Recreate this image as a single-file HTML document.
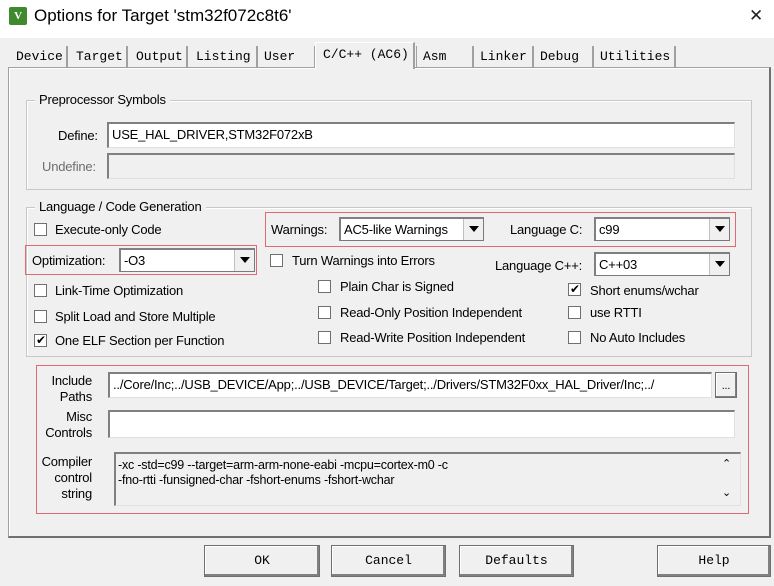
<!DOCTYPE html><html><head><style>
*{margin:0;padding:0;box-sizing:border-box}
body{width:774px;height:586px;background:#f0f0f0;position:relative;overflow:hidden;font:13px "Liberation Sans",sans-serif;color:#000;letter-spacing:-0.2px}
.a{position:absolute;white-space:nowrap}
.tab{position:absolute;top:46px;height:22px;font:13px "Liberation Mono",monospace;letter-spacing:0;padding:3px 0 0 6px;border-right:2px solid #a0a0a0}
.grp{position:absolute;border:1px solid #c8c8c8;box-shadow:inset 1px 1px 0 #fff}
.lg{position:absolute;background:#f0f0f0;padding:0 4px;top:-9px;left:8px}
.inp{position:absolute;background:#fff;border-top:2px solid #808080;border-left:2px solid #808080;border-right:1px solid #e0e0e0;border-bottom:1px solid #e0e0e0;padding:3px 3px 1px}
.dis{background:#f0f0f0}
.cb{position:absolute;width:13px;height:13px;border:1px solid #707070;background:#fff}
.cmb{position:absolute;background:#fff;border:1px solid #7a7a7a;border-top:2px solid #808080;border-left:2px solid #808080;padding:3px 3px 0}
.arr{position:absolute;right:0;top:0;bottom:0;width:20px;background:#f0f0f0;border-left:1px solid #c0c0c0}
.arr:after{content:"";position:absolute;left:5px;top:7px;border:5px solid transparent;border-top:6px solid #000}
.red{position:absolute;border:1.5px solid #e06a72}
.btn{position:absolute;top:545px;height:32px;border:1px solid #707070;box-shadow:inset -2px -2px 0 #808080,inset 1px 1px 0 #fff;font:13px "Liberation Mono",monospace;text-align:center;line-height:30px;letter-spacing:0;background:#f0f0f0}
</style></head><body>
<div class="a" style="left:0;top:0;width:774px;height:38px;background:#fff"></div>
<div class="a" style="left:9px;top:7px;width:18px;height:18px;background:#3f8a2e;border-radius:2px;color:#fff;font:bold 11px 'Liberation Serif',serif;text-align:center;line-height:18px">V</div>
<div class="a" style="left:34px;top:6px;font-size:17px;letter-spacing:0">Options for Target 'stm32f072c8t6'</div>
<div class="a" style="left:749px;top:6px;font-size:17px;font-weight:normal;color:#222">✕</div>

<div class="a" style="left:8px;top:67px;width:763px;height:471px;border:1px solid #a0a0a0;border-right:2px solid #707070;border-bottom:2px solid #707070;box-shadow:inset 1px 1px 0 #fff"></div>
<div class="tab" style="left:10px;width:58px">Device</div>
<div class="tab" style="left:70px;width:58px">Target</div>
<div class="tab" style="left:130px;width:58px">Output</div>
<div class="tab" style="left:190px;width:68px">Listing</div>
<div class="tab" style="left:258px;width:58px">User</div>
<div class="a" style="left:315px;top:42px;width:100px;height:27px;background:#f0f0f0;border:1px solid #fff;border-bottom:none;border-right:2px solid #a0a0a0;font:13px 'Liberation Mono',monospace;letter-spacing:0;padding:4px 0 0 7px">C/C++ (AC6)</div>
<div class="tab" style="left:416px;width:58px;border-left:1px solid #a0a0a0">Asm</div>
<div class="tab" style="left:474px;width:60px">Linker</div>
<div class="tab" style="left:534px;width:60px">Debug</div>
<div class="tab" style="left:594px;width:82px">Utilities</div>

<div class="grp" style="left:26px;top:100px;width:726px;height:90px"><div class="lg">Preprocessor Symbols</div></div>
<div class="a" style="left:58px;top:128px">Define:</div>
<div class="inp" style="left:107px;top:122px;width:628px;height:26px">USE_HAL_DRIVER,STM32F072xB</div>
<div class="a" style="left:42px;top:159px;color:#6d6d6d">Undefine:</div>
<div class="inp dis" style="left:107px;top:153px;width:628px;height:26px"></div>

<div class="grp" style="left:26px;top:207px;width:726px;height:150px"><div class="lg">Language / Code Generation</div></div>
<div class="cb" style="left:34px;top:223px"></div><div class="a" style="left:55px;top:222px">Execute-only Code</div>
<div class="red" style="left:265px;top:212px;width:471px;height:35px"></div>
<div class="a" style="left:271px;top:222px">Warnings:</div>
<div class="cmb" style="left:339px;top:217px;width:145px;height:24px">AC5-like Warnings<div class="arr"></div></div>
<div class="a" style="left:510px;top:222px">Language C:</div>
<div class="cmb" style="left:594px;top:217px;width:136px;height:24px">c99<div class="arr"></div></div>
<div class="red" style="left:25px;top:245px;width:232px;height:30px"></div>
<div class="a" style="left:32px;top:253px">Optimization:</div>
<div class="cmb" style="left:119px;top:248px;width:136px;height:24px">-O3<div class="arr"></div></div>
<div class="cb" style="left:270px;top:254px"></div><div class="a" style="left:292px;top:253px">Turn Warnings into Errors</div>
<div class="a" style="left:495px;top:258px">Language C++:</div>
<div class="cmb" style="left:594px;top:252px;width:136px;height:24px">C++03<div class="arr"></div></div>
<div class="cb" style="left:34px;top:284px"></div><div class="a" style="left:55px;top:283px">Link-Time Optimization</div>
<div class="cb" style="left:318px;top:280px"></div><div class="a" style="left:340px;top:279px">Plain Char is Signed</div>
<div class="cb" style="left:568px;top:283px;font-size:12px;line-height:11px;padding-left:1px">✔</div><div class="a" style="left:590px;top:283px">Short enums/wchar</div>
<div class="cb" style="left:34px;top:310px"></div><div class="a" style="left:55px;top:309px">Split Load and Store Multiple</div>
<div class="cb" style="left:318px;top:306px"></div><div class="a" style="left:340px;top:305px">Read-Only Position Independent</div>
<div class="cb" style="left:568px;top:306px"></div><div class="a" style="left:590px;top:305px">use RTTI</div>
<div class="cb" style="left:34px;top:334px;font-size:12px;line-height:11px;padding-left:1px">✔</div><div class="a" style="left:55px;top:333px">One ELF Section per Function</div>
<div class="cb" style="left:318px;top:331px"></div><div class="a" style="left:340px;top:330px">Read-Write Position Independent</div>
<div class="cb" style="left:568px;top:331px"></div><div class="a" style="left:590px;top:330px">No Auto Includes</div>

<div class="red" style="left:36px;top:365px;width:713px;height:149px"></div>
<div class="a" style="left:48px;top:373px;text-align:right;width:44px;line-height:16px">Include<br>Paths</div>
<div class="inp" style="left:108px;top:372px;width:604px;height:26px;overflow:hidden">../Core/Inc;../USB_DEVICE/App;../USB_DEVICE/Target;../Drivers/STM32F0xx_HAL_Driver/Inc;../</div>
<div class="a" style="left:715px;top:372px;width:22px;height:26px;border:1px solid #707070;box-shadow:inset -1px -1px 0 #808080,inset 1px 1px 0 #fff;text-align:center;font-size:11px;line-height:26px">...</div>
<div class="a" style="left:40px;top:409px;text-align:right;width:52px;line-height:16px">Misc<br>Controls</div>
<div class="inp" style="left:108px;top:410px;width:627px;height:28px"></div>
<div class="a" style="left:38px;top:454px;text-align:right;width:54px;line-height:16px">Compiler<br>control<br>string</div>
<div class="inp dis" style="left:114px;top:452px;width:627px;height:54px;line-height:15px;font-size:12.5px;padding:4px 2px">-xc -std=c99 --target=arm-arm-none-eabi -mcpu=cortex-m0 -c<br>-fno-rtti -funsigned-char -fshort-enums -fshort-wchar</div>
<div class="a" style="left:722px;top:457px;font-size:11px">⌃</div>
<div class="a" style="left:722px;top:486px;font-size:11px">⌄</div>

<div class="btn" style="left:204px;width:116px">OK</div>
<div class="btn" style="left:331px;width:115px">Cancel</div>
<div class="btn" style="left:459px;width:115px">Defaults</div>
<div class="btn" style="left:657px;width:114px">Help</div>
</body></html>
